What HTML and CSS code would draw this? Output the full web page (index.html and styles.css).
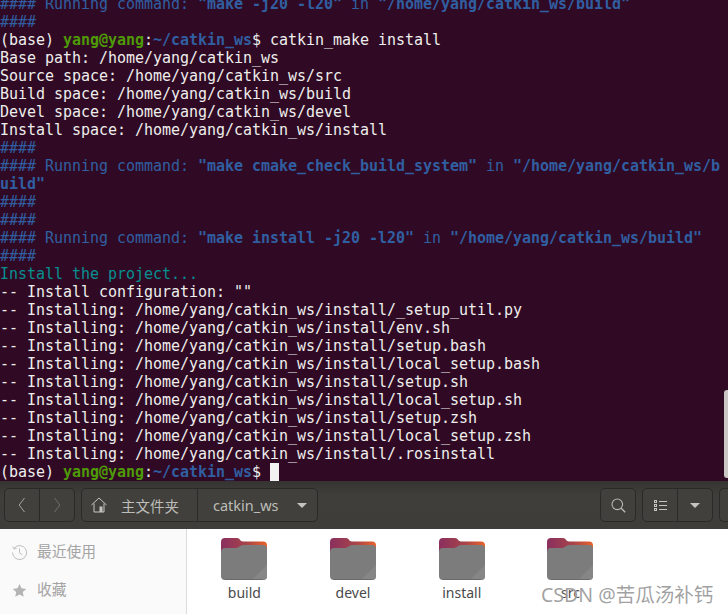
FILE: index.html
```html
<!DOCTYPE html>
<html lang="zh">
<head>
<meta charset="utf-8">
<title>catkin_ws</title>
<link rel="stylesheet" href="styles.css">
</head>
<body>
<section class="terminal">
<div class="scrollbar"></div>
<pre class="output"><span class="blue">#### Running command: <b>"make -j20 -l20"</b> in <b>"/home/yang/catkin_ws/build"</b></span>
<span class="blue">####</span>
(base) <b class="green">yang@yang</b>:<b class="blue">~/catkin_ws</b>$ catkin_make install
Base path: /home/yang/catkin_ws
Source space: /home/yang/catkin_ws/src
Build space: /home/yang/catkin_ws/build
Devel space: /home/yang/catkin_ws/devel
Install space: /home/yang/catkin_ws/install
<span class="blue">####</span>
<span class="blue">#### Running command: <b>"make cmake_check_build_system"</b> in <b>"/home/yang/catkin_ws/b</b></span>
<span class="blue"><b>uild"</b></span>
<span class="blue">####</span>
<span class="blue">####</span>
<span class="blue">#### Running command: <b>"make install -j20 -l20"</b> in <b>"/home/yang/catkin_ws/build"</b></span>
<span class="blue">####</span>
<span class="teal">Install the project...</span>
-- Install configuration: ""
-- Installing: /home/yang/catkin_ws/install/_setup_util.py
-- Installing: /home/yang/catkin_ws/install/env.sh
-- Installing: /home/yang/catkin_ws/install/setup.bash
-- Installing: /home/yang/catkin_ws/install/local_setup.bash
-- Installing: /home/yang/catkin_ws/install/setup.sh
-- Installing: /home/yang/catkin_ws/install/local_setup.sh
-- Installing: /home/yang/catkin_ws/install/setup.zsh
-- Installing: /home/yang/catkin_ws/install/local_setup.zsh
-- Installing: /home/yang/catkin_ws/install/.rosinstall
(base) <b class="green">yang@yang</b>:<b class="blue">~/catkin_ws</b>$ <span class="cursor"> </span></pre>
</section>

<section class="files">
<header class="toolbar">
  <div class="group nav">
    <div class="btn nav-btn"><svg width="8" height="16" viewBox="0 0 8 16"><path d="M6.5 1 1.2 8l5.3 7" fill="none" stroke="#a5a5a0" stroke-width="1"/></svg></div>
    <div class="btn nav-btn"><svg width="8" height="16" viewBox="0 0 8 16"><path d="M1.5 1 6.8 8l-5.3 7" fill="none" stroke="#6f6f6b" stroke-width="1"/></svg></div>
  </div>
  <div class="group path">
    <div class="btn crumb-home">
      <svg width="16" height="16" viewBox="0 0 16 16"><path d="M.5 8 8 1l7.5 7M3 6.5V15h10V6.5" fill="none" stroke="#c4c4c0" stroke-width="1"/><rect x="8.5" y="9.5" width="3" height="5.5" fill="#c4c4c0"/></svg>
      <span>主文件夹</span>
    </div>
    <div class="btn crumb-current"><span>catkin_ws</span><i class="caret"></i></div>
  </div>
  <div class="spacer"></div>
  <div class="group search">
    <div class="btn"><svg width="15" height="15" viewBox="0 0 15 15"><circle cx="6.3" cy="6.3" r="5.3" fill="none" stroke="#b8b8b4" stroke-width="1.1"/><path d="m10.2 10.2 4 4" stroke="#b8b8b4" stroke-width="1.4"/></svg></div>
  </div>
  <div class="group view">
    <div class="btn"><svg width="13" height="11" viewBox="0 0 13 11"><g fill="none" stroke="#c4c4c0"><rect x=".5" y=".5" width="2" height="2"/><rect x=".5" y="4.5" width="2" height="2"/><rect x=".5" y="8.5" width="2" height="2"/><path d="M5 1.5h8M5 5.5h8M5 9.5h8"/></g></svg></div>
    <div class="btn"><i class="caret"></i></div>
  </div>
  <div class="group clipped"></div>
</header>
<div class="main">
  <nav class="sidebar">
    <div class="place">
      <svg width="15" height="15" viewBox="0 0 15 15"><path d="M2.3 3A7 7 0 1 1 .6 7.5" fill="none" stroke="#bdbdbd" stroke-width="1"/><path d="M.8 1.5 2 4l2.6-.6M7.5 3.5v4.3l2.7 2" fill="none" stroke="#bdbdbd" stroke-width="1"/></svg>
      <span>最近使用</span>
    </div>
    <div class="place">
      <svg width="15" height="15" viewBox="0 0 15 15"><path d="m7.5 1 2 4.3 4.8.6-3.5 3.2.9 4.7-4.2-2.3-4.2 2.3.9-4.7L.7 5.9l4.8-.6z" fill="#b4b4b4"/></svg>
      <span>收藏</span>
    </div>
  </nav>
  <div class="grid">
    <div class="item"><svg class="folder" width="46" height="42" viewBox="0 0 46 42"><use href="#folder-shape"/></svg><span>build</span></div>
    <div class="item"><svg class="folder" width="46" height="42" viewBox="0 0 46 42"><use href="#folder-shape"/></svg><span>devel</span></div>
    <div class="item"><svg class="folder" width="46" height="42" viewBox="0 0 46 42"><use href="#folder-shape"/></svg><span>install</span></div>
    <div class="item"><svg class="folder" width="46" height="42" viewBox="0 0 46 42"><use href="#folder-shape"/></svg><span>src</span></div>
  </div>
</div>
<div class="watermark">CSDN @苦瓜汤补钙</div>
</section>

<svg class="defs" width="0" height="0">
  <defs>
    <linearGradient id="tab" x1="0" y1="0" x2="1" y2="0">
      <stop offset="0" stop-color="#8a2f5f"/><stop offset=".55" stop-color="#a6434a"/><stop offset="1" stop-color="#e9622a"/>
    </linearGradient>
    <g id="folder-shape">
      <path d="M0 16V4a4 4 0 0 1 4-4h12c3 0 3 3.5 6 3.5h20a4 4 0 0 1 4 4V16z" fill="url(#tab)"/>
      <path d="M0 38V14a4 4 0 0 1 4-4h11c3 0 4-3 7-3h20a4 4 0 0 1 4 4v27a4 4 0 0 1-4 4H4a4 4 0 0 1-4-4z" fill="#7c7c7c"/>
      <path d="M46 27v11a4 4 0 0 1-4 4H31z" fill="#868686"/>
      <path d="M4 41.5h38" stroke="#6a6a6a" stroke-width="1"/>
    </g>
  </defs>
</svg>
</body>
</html>
```
FILE: styles.css
```css
* { box-sizing: border-box; }
html, body { margin: 0; padding: 0; }
body {
  width: 728px;
  height: 614px;
  overflow: hidden;
  background: #fff;
  font-family: "Noto Sans", "Noto Sans CJK SC", sans-serif;
}

/* terminal */
.terminal {
  position: relative;
  height: 481px;
  overflow: hidden;
  background: #300a24;
}
.output {
  margin: -5px 0 0;
  font: 15px/18px "DejaVu Sans Mono", monospace;
  letter-spacing: -0.03px;
  color: #eeeeec;
  white-space: pre;
}
.output b { font-weight: 700; }
.blue { color: #305fa1; }
.green { color: #4e9a06; }
.teal { color: #069092; }
.cursor { background: #f2f2f2; }
.scrollbar {
  position: absolute;
  top: 390px;
  right: 0;
  width: 4px;
  height: 88px;
  border-radius: 3px 0 0 3px;
  background: #c9c6c4;
}

/* file manager */
.files { position: relative; height: 133px; }
.toolbar {
  display: flex;
  align-items: center;
  height: 48px;
  padding: 0 0 0 4px;
  gap: 6px;
  background: linear-gradient(#353432, #3f3e3a 30%, #3e3d39);
  overflow: hidden;
}
.group {
  display: flex;
  flex: none;
  height: 34px;
  border: 1px solid #2a2a28;
  border-radius: 5px;
  background: #41403c;
}
.group .btn + .btn { border-left: 1px solid #2a2a28; }
.btn {
  display: flex;
  align-items: center;
  justify-content: center;
  height: 100%;
}
.nav { width: 71px; }
.nav-btn { flex: 1; }
.path { width: 237px; color: #bdbdb9; font-size: 14.5px; }
.crumb-home { width: 115px; justify-content: flex-start; gap: 14px; padding-left: 9px; }
.crumb-current { flex: 1; justify-content: flex-start; gap: 18px; padding-left: 15px; }
.caret {
  display: block;
  flex: none;
  width: 0;
  height: 0;
  border: 5px solid transparent;
  border-top: 5px solid #c4c4c0;
  border-bottom: 0;
}
.spacer { flex: 1; min-width: 0; }
.search { width: 36px; }
.search .btn { width: 100%; }
.view { width: 71px; }
.view .btn { flex: 1; }
.clipped { width: 9px; border-right: 0; border-radius: 5px 0 0 5px; }

.main { display: flex; height: 85px; }
.sidebar {
  flex: none;
  width: 187px;
  padding: 4px 0 0 12px;
  border-right: 1px solid #dcdcda;
  background: #fafafa;
  color: #a4a4a4;
  font-size: 14.75px;
}
.place { display: flex; align-items: center; gap: 10px; height: 38px; }
.place svg { flex: none; }
.place span { line-height: 24px; margin-top: -2px; }

.grid {
  flex: 1;
  display: grid;
  grid-template-columns: repeat(4, 108.7px);
  padding: 9px 0 0 3px;
  background: #fff;
  align-content: start;
}
.item {
  display: flex;
  flex-direction: column;
  align-items: center;
  color: #4a4a4a;
  font-size: 14px;
  line-height: 20px;
}
.folder { display: block; margin-bottom: 3px; }

.watermark {
  position: absolute;
  left: 541px;
  top: 101px;
  font-size: 19.5px;
  line-height: 26px;
  white-space: nowrap;
  color: rgba(125, 125, 125, 0.72);
  text-shadow: 0 0 1px rgba(255, 255, 255, 0.8);
}
.defs { position: absolute; }
```
